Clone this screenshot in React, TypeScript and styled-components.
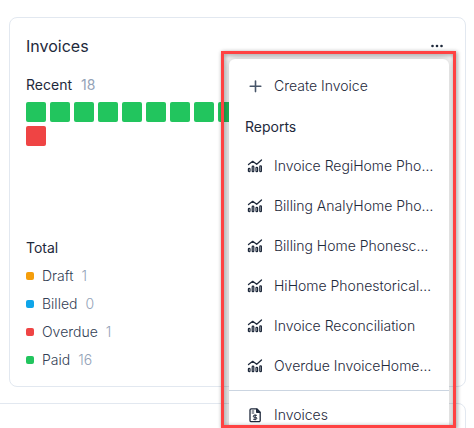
import React from "react";
import styled, { createGlobalStyle } from "styled-components";

const GlobalStyle = createGlobalStyle`
  *, *::before, *::after { box-sizing: border-box; }
  html, body { height: 100%; }
  body {
    margin: 0;
    overflow: hidden;
    background: #ffffff;
    color: #1e293b;
    font-family: Inter, "Liberation Sans", sans-serif;
    font-size: 14px;
    line-height: 20px;
  }
  #root { height: 100%; }
`;

const Page = styled.div`
  position: relative;
  height: 100%;
  overflow: hidden;
  padding: 17px 8px 0 9px;
`;

const Card = styled.section`
  position: relative;
  display: flex;
  flex-direction: column;
  padding: 16px;
  border: 1px solid #e2e8f0;
  border-radius: 8px;
`;

const NextCard = styled(Card)`
  margin: 16px 0 0 -24px;
  min-height: 200px;
`;

const CardHeader = styled.header`
  display: flex;
  align-items: center;
  justify-content: space-between;
  height: 24px;
`;

const CardTitle = styled.h2`
  margin: 0;
  font-size: 16px;
  font-weight: 400;
  line-height: 24px;
`;

const MoreButton = styled.button`
  display: flex;
  align-items: center;
  justify-content: center;
  width: 24px;
  height: 24px;
  padding: 0;
  border: 0;
  background: none;
  color: #1e293b;
`;

const SectionTitle = styled.h3`
  display: flex;
  gap: 9px;
  margin: 0;
  font-size: 14px;
  font-weight: 400;
  line-height: 20px;
`;

const Count = styled.span`
  color: #94a3b8;
`;

const Recent = styled.div`
  display: flex;
  flex-direction: column;
  gap: 7px;
  min-height: 146px;
  margin: 17px 0;
`;

const Squares = styled.div`
  display: flex;
  flex-wrap: wrap;
  gap: 4px;
`;

const Square = styled.span<{ $color: string }>`
  width: 20px;
  height: 20px;
  border-radius: 2px;
  background: ${(p) => p.$color};
`;

const Totals = styled.ul`
  display: flex;
  flex-direction: column;
  gap: 8px;
  margin: 8px 0 0;
  padding: 0;
  list-style: none;
`;

const TotalRow = styled.li`
  display: flex;
  align-items: center;
  gap: 8px;
  color: #334155;
  font-weight: 300;
`;

const Dot = styled.span<{ $color: string }>`
  width: 8px;
  height: 8px;
  border-radius: 2px;
  background: ${(p) => p.$color};
`;

const Menu = styled.nav`
  position: absolute;
  z-index: 1;
  top: 41px;
  right: 16px;
  width: 220px;
  padding: 7px 0;
  border-radius: 6px;
  background: #ffffff;
  box-shadow: 0 0 8px 2px rgba(0, 0, 0, 0.18);
`;

const MenuHeading = styled.h3`
  margin: 0;
  padding: 11px 16px 9px;
  font-size: 14px;
  font-weight: 400;
  line-height: 20px;
`;

const MenuItem = styled.button`
  display: flex;
  align-items: center;
  gap: 11px;
  width: 100%;
  height: 40px;
  padding: 0 12px 0 18px;
  border: 0;
  background: none;
  color: #1e293b;
  font: inherit;
  font-weight: 300;
  text-align: left;
`;

const MenuLabel = styled.span`
  flex: 1;
  min-width: 0;
  white-space: nowrap;
`;

const Divider = styled.hr`
  margin: 4px 0;
  border: 0;
  border-top: 1px solid #cbd5e1;
`;

const Highlight = styled.div`
  position: absolute;
  z-index: 2;
  top: 51px;
  right: 18px;
  bottom: 0;
  width: 235px;
  border: 3px solid #ff4242;
  filter: drop-shadow(1px 1px 2px rgba(0, 0, 0, 0.45));
  pointer-events: none;
`;

const Icon = styled.svg`
  flex: none;
  width: 16px;
  height: 16px;
  fill: none;
  stroke: #1e293b;
`;

const DotsIcon = () => (
  <Icon viewBox="0 0 16 16" aria-hidden="true">
    <g fill="#1e293b" stroke="none">
      <circle cx="3.5" cy="8" r="1.3" />
      <circle cx="8" cy="8" r="1.3" />
      <circle cx="12.5" cy="8" r="1.3" />
    </g>
  </Icon>
);

const PlusIcon = () => (
  <Icon viewBox="0 0 16 16" aria-hidden="true">
    <path d="M8.5 3v10.6M3.2 8.3h10.6" stroke="#475569" strokeWidth="1.6" strokeLinecap="round" />
  </Icon>
);

const ChartIcon = () => (
  <Icon viewBox="0 0 16 16" aria-hidden="true">
    <path d="M1.5 6.6 5.7 3.3l4 3 4.8-4.3" strokeWidth="1.3" strokeLinecap="round" strokeLinejoin="round" />
    <g strokeWidth="1.2">
      <rect x="1.4" y="10.4" width="1.6" height="3.2" rx="0.7" />
      <rect x="5.2" y="8.2" width="1.6" height="5.4" rx="0.7" />
      <rect x="9" y="9.4" width="1.6" height="4.2" rx="0.7" />
      <rect x="12.8" y="7.9" width="1.6" height="5.7" rx="0.7" />
    </g>
  </Icon>
);

const InvoiceIcon = () => (
  <Icon viewBox="0 0 16 16" aria-hidden="true">
    <path d="M4.2 1.8h5.6l3.4 3.4v8.2a1.2 1.2 0 0 1-1.2 1.2H4.2A1.2 1.2 0 0 1 3 13.4V3a1.2 1.2 0 0 1 1.2-1.2Z" strokeWidth="1.3" strokeLinejoin="round" />
    <path d="M9.5 1.8v3.7h3.7" fill="#1e293b" strokeWidth="1" />
    <path d="M4.7 4h2.5M4.7 6h2.5" strokeWidth="0.9" />
    <path d="M9.9 8.3H7.3a1 1 0 0 0 0 2h1.5a1 1 0 0 1 0 2H6.2M8.1 7.3v6" strokeWidth="1" />
  </Icon>
);

const GREEN = "#22c55e";
const RED = "#ef4444";
const recent = [...Array<string>(17).fill(GREEN), RED];

const totals = [
  { label: "Draft", count: 1, color: "#f59e0b" },
  { label: "Billed", count: 0, color: "#0ea5e9" },
  { label: "Overdue", count: 1, color: RED },
  { label: "Paid", count: 16, color: GREEN },
];

const reports = [
  "Invoice RegiHome Pho…",
  "Billing AnalyHome Pho…",
  "Billing Home Phonesc…",
  "HiHome Phonestorical…",
  "Invoice Reconciliation",
  "Overdue InvoiceHome…",
];

export default function App() {
  return (
    <>
      <GlobalStyle />
      <Page>
        <Card>
          <CardHeader>
            <CardTitle>Invoices</CardTitle>
            <MoreButton type="button" aria-label="More actions" aria-expanded="true">
              <DotsIcon />
            </MoreButton>
          </CardHeader>
          <Recent>
            <SectionTitle>
              Recent <Count>18</Count>
            </SectionTitle>
            <Squares>
              {recent.map((color, i) => (
                <Square key={i} $color={color} />
              ))}
            </Squares>
          </Recent>
          <SectionTitle>Total</SectionTitle>
          <Totals>
            {totals.map((t) => (
              <TotalRow key={t.label}>
                <Dot $color={t.color} />
                <span>{t.label}</span>
                <Count>{t.count}</Count>
              </TotalRow>
            ))}
          </Totals>
          <Menu aria-label="Invoice actions">
            <MenuItem type="button">
              <PlusIcon />
              <MenuLabel>Create Invoice</MenuLabel>
            </MenuItem>
            <MenuHeading>Reports</MenuHeading>
            {reports.map((label) => (
              <MenuItem type="button" key={label}>
                <ChartIcon />
                <MenuLabel>{label}</MenuLabel>
              </MenuItem>
            ))}
            <Divider />
            <MenuItem type="button">
              <InvoiceIcon />
              <MenuLabel>Invoices</MenuLabel>
            </MenuItem>
          </Menu>
        </Card>
        <NextCard />
        <Highlight />
      </Page>
    </>
  );
}
